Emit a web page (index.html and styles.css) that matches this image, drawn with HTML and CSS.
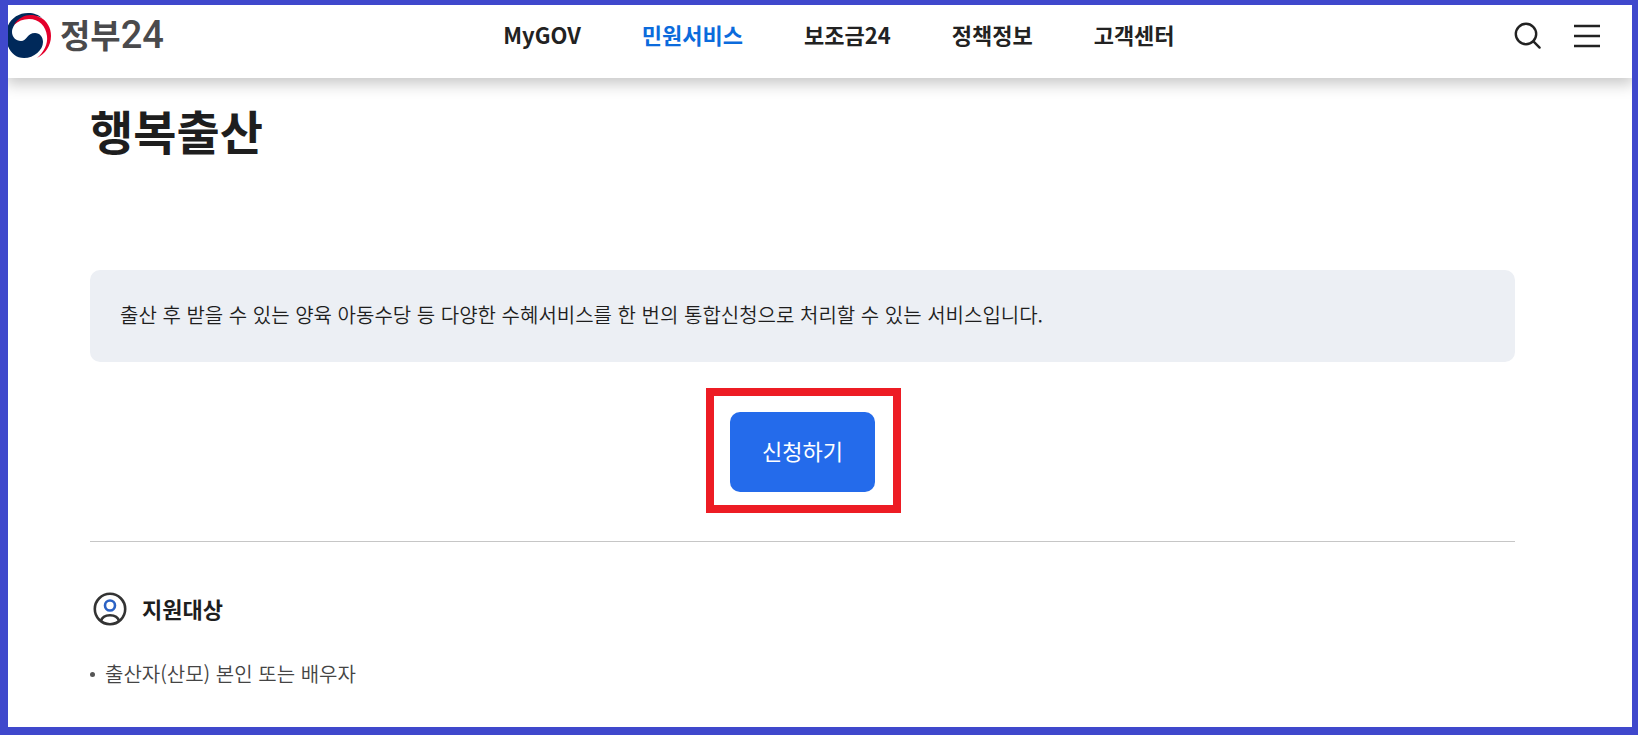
FILE: index.html
```html
<!DOCTYPE html>
<html lang="ko">
<head>
<meta charset="utf-8">
<title>행복출산 | 정부24</title>
<meta name="viewport" content="width=device-width, initial-scale=1">
<link rel="stylesheet" href="styles.css">
</head>
<body>
<div class="frame">
  <header class="header">
    <a class="logo" href="#">
      <svg class="logo-mark" width="44" height="46" viewBox="8 12 44 46" aria-hidden="true">
        <path fill="#00295a" d="M6 35C6 22 16 13 28 13C34 13 39 15 42 18C36 15 29 15 23 18C16 21 12 27 12 32C12 37 16 41 21 41C27 41 27 33 35 33C40 33 43 37 43 42C43 50 34 58 24 58C13 58 6 48 6 35Z"/>
        <path fill="#e4002b" d="M14 25C20 15 31 13 39 17C47 20 51 28 51 36C51 46 45 54 37 58C44 52 48 44 47 36C46 26 39 19 29 19C23 19 18 21 14 25Z"/>
      </svg>
      <span class="logo-text">정부<span class="logo-num">24</span></span>
    </a>
    <nav class="nav" aria-label="주 메뉴">
      <a href="#">MyGOV</a>
      <a class="active" href="#" aria-current="page">민원서비스</a>
      <a href="#">보조금24</a>
      <a href="#">정책정보</a>
      <a href="#">고객센터</a>
    </nav>
    <div class="tools">
      <button type="button" aria-label="검색">
        <svg width="28" height="28" viewBox="0 0 28 28" fill="none" stroke="#222" stroke-width="2.4" stroke-linecap="round"><circle cx="12" cy="12" r="10.2"/><path d="M19.4 19.4L25.6 25.6"/></svg>
      </button>
      <button type="button" aria-label="전체메뉴">
        <svg width="26" height="28" viewBox="0 0 26 28" fill="none" stroke="#222" stroke-width="2.6"><path d="M0 4H26M0 14H26M0 24H26"/></svg>
      </button>
    </div>
  </header>
  <main class="content">
    <h1>행복출산</h1>
    <p class="summary">출산 후 받을 수 있는 양육 아동수당 등 다양한 수혜서비스를 한 번의 통합신청으로 처리할 수 있는 서비스입니다.</p>
    <div class="apply">
      <div class="highlight"><button class="apply-button" type="button">신청하기</button></div>
    </div>
    <section class="target">
      <h2>
        <svg width="34" height="34" viewBox="0 0 34 34" fill="none" stroke-width="2.6" aria-hidden="true"><circle cx="17" cy="17" r="15.2" stroke="#333"/><circle cx="17" cy="13.5" r="5" stroke="#2b62c4"/><path stroke="#333" d="M8 29C9 25 12 23.2 17 23.2S25 25 26 29"/></svg>
        <span>지원대상</span>
      </h2>
      <ul><li>출산자(산모) 본인 또는 배우자</li></ul>
    </section>
  </main>
</div>
</body>
</html>
```

FILE: styles.css
```css
* {
  box-sizing: border-box;
}

body {
  margin: 0;
  padding-bottom: 3px;
  background: #fff;
  color: #1e1e1e;
  font-family: "Noto Sans CJK KR", "Noto Sans", sans-serif;
}

.frame {
  min-height: calc(100vh - 3px);
  border: solid #3f48cc;
  border-width: 5px 6px 8px 8px;
}

.header {
  display: flex;
  align-items: center;
  justify-content: space-between;
  height: 73px;
  padding: 0 32px 11px 0;
  box-shadow: 0 4px 14px 2px rgba(0, 0, 0, 0.22);
  clip-path: inset(0 0 -24px 0);
}

.logo {
  display: flex;
  align-items: center;
  gap: 8px;
  padding-bottom: 2px;
  color: #4a4a4c;
  text-decoration: none;
}

.logo-text {
  padding-bottom: 2px;
  font-size: 33px;
  font-weight: 700;
  line-height: 40px;
}

.logo-num {
  font-family: Roboto, sans-serif;
  font-size: 38px;
  font-weight: 500;
}

.nav {
  display: flex;
  gap: 61px;
  padding-bottom: 4px;
  font-size: 22px;
  font-weight: 700;
  line-height: 32px;
}

.nav a {
  color: #222;
  text-decoration: none;
  white-space: nowrap;
}

.nav .active {
  color: #0b6bdc;
}

.tools {
  display: flex;
  gap: 32px;
}

.tools button {
  display: flex;
  padding: 0;
  border: 0;
  background: none;
}

.content {
  padding: 16px 117px 32px 82px;
}

h1 {
  margin: 0;
  font-size: 47px;
  font-weight: 700;
  line-height: 72px;
}

.summary {
  margin: 104px 0 0;
  padding: 29px 30px 31px;
  border-radius: 10px;
  background: #eceff4;
  font-size: 20px;
  font-weight: 350;
  line-height: 32px;
}

.apply {
  display: flex;
  justify-content: center;
  padding: 26px 0 28px 2px;
  border-bottom: 1px solid #c6c6c6;
}

.highlight {
  padding: 16px 18px 13px 16px;
  border: 8px solid #ed1c24;
}

.apply-button {
  display: block;
  height: 80px;
  padding: 0 32px 5px;
  border: 0;
  border-radius: 10px;
  background: #246beb;
  color: #fff;
  font-family: inherit;
  font-size: 22px;
}

h2 {
  display: flex;
  align-items: center;
  gap: 15px;
  margin: 50px 0 0;
  padding-left: 3px;
  font-size: 22px;
  font-weight: 700;
  line-height: 32px;
}

h2 span {
  padding-bottom: 2px;
}

ul {
  margin: 32px 0 0;
  padding: 0;
  list-style: none;
  color: #444;
  font-size: 20px;
  font-weight: 350;
  line-height: 32px;
}

li {
  display: flex;
  align-items: center;
  gap: 10px;
}

li::before {
  width: 5px;
  height: 5px;
  border-radius: 50%;
  background: #555;
  content: "";
}
```
